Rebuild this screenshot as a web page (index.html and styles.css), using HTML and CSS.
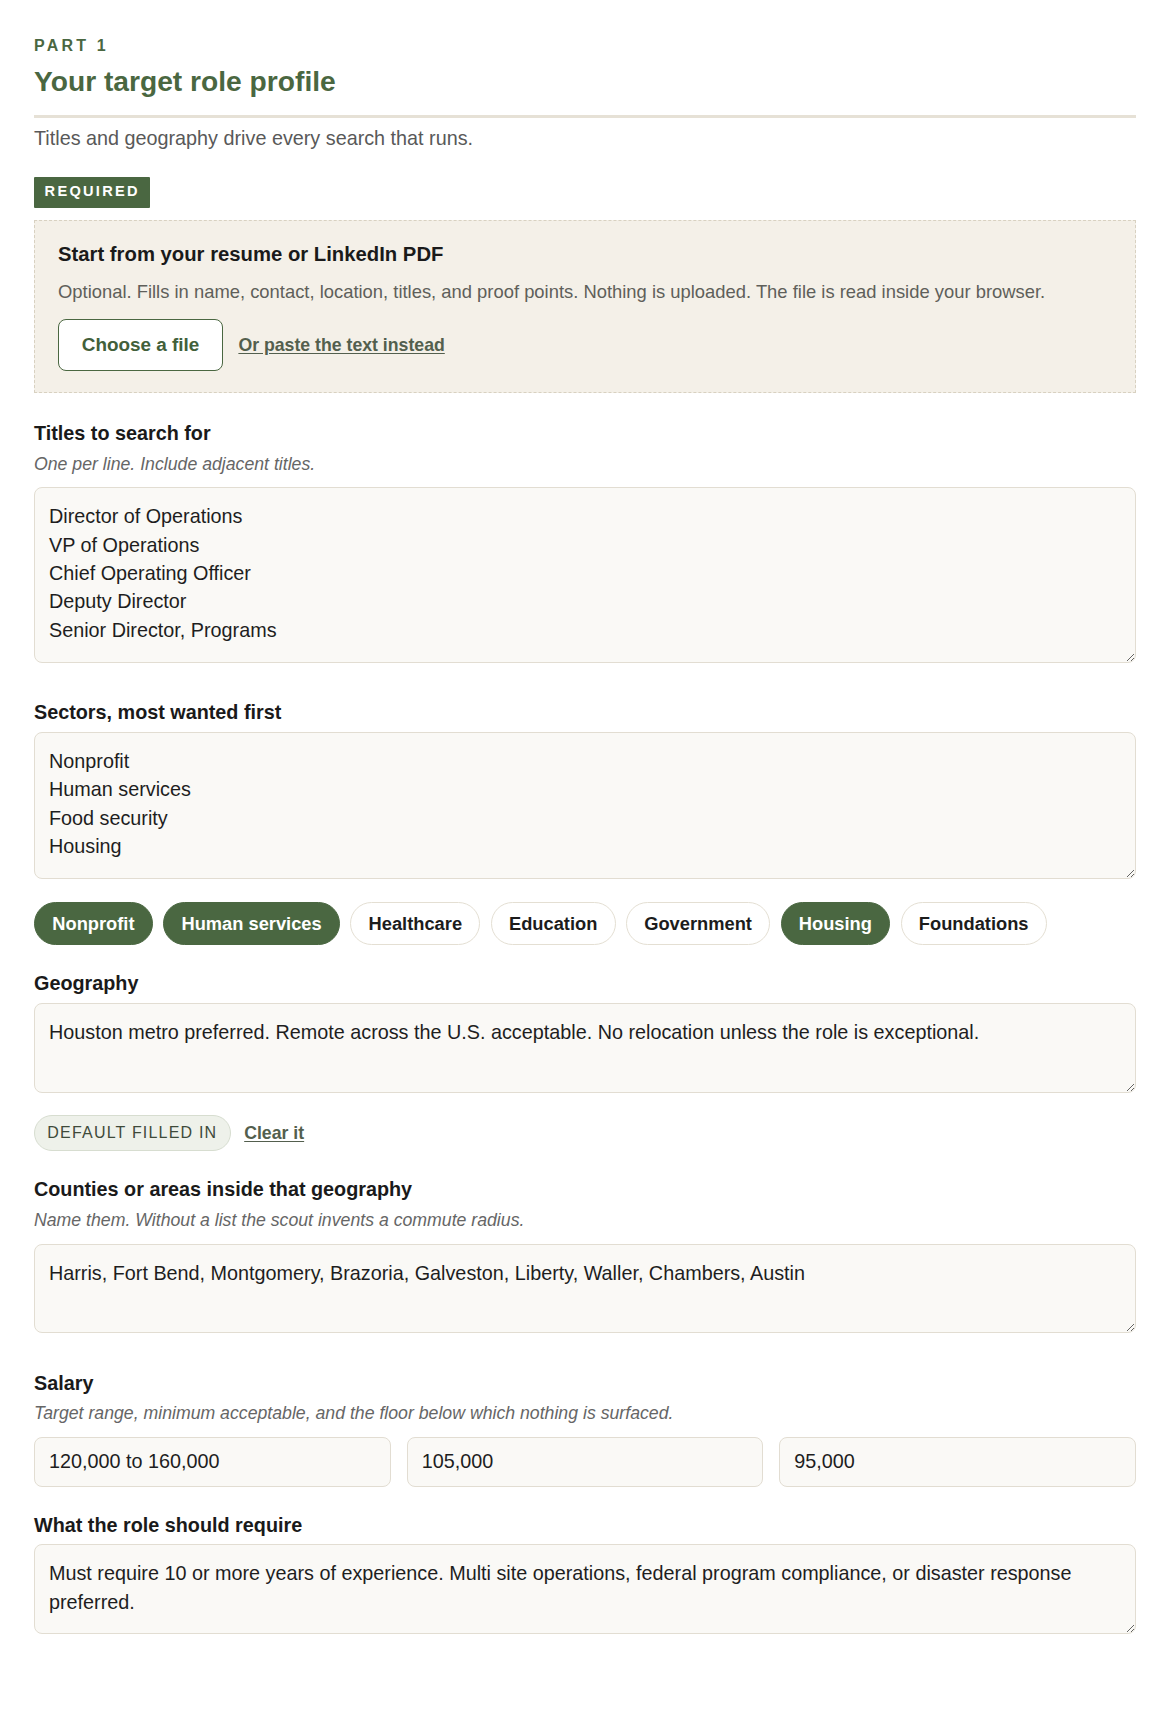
FILE: index.html
```html
<!DOCTYPE html>
<html lang="en">
<head>
<meta charset="utf-8">
<title>Your target role profile</title>
<link rel="stylesheet" href="styles.css">
</head>
<body>
<main class="page">
  <header class="header">
    <p class="eyebrow">Part 1</p>
    <h1 class="title">Your target role profile</h1>
  </header>
  <p class="lede">Titles and geography drive every search that runs.</p>
  <span class="badge">Required</span>

  <section class="upload">
    <h2 class="upload-title">Start from your resume or LinkedIn PDF</h2>
    <p class="upload-desc">Optional. Fills in name, contact, location, titles, and proof points. Nothing is uploaded. The file is read inside your browser.</p>
    <div class="upload-actions">
      <button type="button" class="btn">Choose a file</button>
      <a href="#" class="link">Or paste the text instead</a>
    </div>
  </section>

  <div class="fields">
    <div class="field">
      <label class="label" for="titles">Titles to search for</label>
      <p class="hint">One per line. Include adjacent titles.</p>
      <textarea id="titles" class="area rows-5">Director of Operations
VP of Operations
Chief Operating Officer
Deputy Director
Senior Director, Programs</textarea>
    </div>

    <div class="field">
      <label class="label" for="sectors">Sectors, most wanted first</label>
      <textarea id="sectors" class="area rows-4">Nonprofit
Human services
Food security
Housing</textarea>
      <div class="chips">
        <button type="button" class="chip is-on">Nonprofit</button>
        <button type="button" class="chip is-on">Human services</button>
        <button type="button" class="chip">Healthcare</button>
        <button type="button" class="chip">Education</button>
        <button type="button" class="chip">Government</button>
        <button type="button" class="chip is-on">Housing</button>
        <button type="button" class="chip">Foundations</button>
      </div>
    </div>

    <div class="field">
      <label class="label" for="geo">Geography</label>
      <textarea id="geo" class="area rows-2">Houston metro preferred. Remote across the U.S. acceptable. No relocation unless the role is exceptional.</textarea>
      <div class="status">
        <span class="pill">Default filled in</span>
        <a href="#" class="link">Clear it</a>
      </div>
    </div>

    <div class="field">
      <label class="label" for="areas">Counties or areas inside that geography</label>
      <p class="hint">Name them. Without a list the scout invents a commute radius.</p>
      <textarea id="areas" class="area rows-2">Harris, Fort Bend, Montgomery, Brazoria, Galveston, Liberty, Waller, Chambers, Austin</textarea>
    </div>

    <div class="field">
      <label class="label" for="sal1">Salary</label>
      <p class="hint">Target range, minimum acceptable, and the floor below which nothing is surfaced.</p>
      <div class="salary">
        <input id="sal1" class="input" type="text" value="120,000 to 160,000">
        <input class="input" type="text" value="105,000">
        <input class="input" type="text" value="95,000">
      </div>
    </div>

    <div class="field">
      <label class="label" for="req">What the role should require</label>
      <textarea id="req" class="area rows-2">Must require 10 or more years of experience. Multi site operations, federal program compliance, or disaster response preferred.</textarea>
    </div>
  </div>
</main>
</body>
</html>
```

FILE: styles.css
```css
* { box-sizing: border-box; }

html, body {
  margin: 0;
  background: #ffffff;
}

body {
  font-family: "Liberation Sans", Arial, sans-serif;
  font-size: 19.8px;
  line-height: 1.43;
  color: #1c1c1c;
}

.page {
  padding: 36px 34px 60px;
}

.header {
  border-bottom: 3px solid #e6e1d6;
  padding-bottom: 16.2px;
}

.eyebrow {
  margin: 0;
  font-size: 16px;
  line-height: 19.2px;
  font-weight: 700;
  letter-spacing: 3.2px;
  text-transform: uppercase;
  color: #4a6741;
}

.title {
  margin: 9.75px 0 0;
  font-size: 28.2px;
  line-height: 33.6px;
  font-weight: 700;
  color: #4a6741;
}

.lede {
  margin: 6.1px 0 0;
  line-height: 28.3px;
  color: #595959;
}

.badge {
  display: block;
  width: fit-content;
  margin-top: 25.3px;
  padding: 6px 10.6px 8px;
  background: #4a6741;
  color: #ffffff;
  font-size: 14.6px;
  line-height: 16.6px;
  font-weight: 700;
  letter-spacing: 2.27px;
  text-transform: uppercase;
  border-radius: 1px;
}

.upload {
  margin-top: 11.7px;
  padding: 20px 23px 21px;
  background: #f4f0e8;
  border: 1px dashed #d8d1c1;
}

.upload-title {
  margin: 0;
  font-size: 20.3px;
  line-height: 26.4px;
  font-weight: 700;
  color: #1a1a1a;
}

.upload-desc {
  margin: 11.6px 0 0;
  font-size: 18.4px;
  line-height: 26.5px;
  color: #5f5f5a;
}

.upload-actions {
  display: flex;
  align-items: center;
  gap: 15.3px;
  margin-top: 14px;
}

.btn {
  font-family: inherit;
  font-size: 18.9px;
  line-height: 22.7px;
  font-weight: 700;
  color: #42603a;
  background: #ffffff;
  border: 1.5px solid #4a6741;
  border-radius: 8px;
  padding: 13.3px 22.75px;
  cursor: pointer;
}

.link {
  font-size: 17.7px;
  line-height: 22px;
  font-weight: 700;
  color: #535f4e;
  text-decoration: underline;
  text-underline-offset: 2px;
}

.fields {
  display: flex;
  flex-direction: column;
  gap: 26px;
  margin-top: 28.5px;
}

.label {
  display: block;
  margin-bottom: 6.3px;
  font-weight: 700;
  line-height: 25.35px;
  color: #1a1a1a;
}

.hint {
  margin: 0 0 12px;
  font-size: 17.7px;
  line-height: 22.8px;
  font-style: italic;
  color: #666666;
}

.area {
  display: block;
  width: 100%;
  margin: 0;
  padding: 14px 14px 15.5px;
  font-family: inherit;
  font-size: 19.8px;
  line-height: 28.3px;
  color: #1e1e1e;
  background: #faf9f6;
  border: 1.5px solid #e2ddd2;
  border-radius: 8px;
  resize: vertical;
}

.field > .area:last-child {
  margin-bottom: 11.5px;
}

.rows-5 { height: 175.5px; }
.rows-4 { height: 146.8px; }
.rows-2 { height: 89.6px; }

.chips {
  display: flex;
  flex-wrap: wrap;
  gap: 10.3px;
  margin-top: 23.5px;
}

.chip {
  font-family: inherit;
  font-size: 18.3px;
  line-height: 22.3px;
  font-weight: 700;
  color: #1c1c1c;
  background: #ffffff;
  border: 1.5px solid #e4dfd3;
  border-radius: 999px;
  padding: 9.3px 17.3px;
  cursor: pointer;
}

.chip.is-on {
  background: #4a6741;
  border-color: #4a6741;
  color: #ffffff;
}

.status {
  display: flex;
  align-items: center;
  gap: 13.5px;
  margin-top: 22.3px;
}

.pill {
  display: inline-block;
  padding: 7.8px 12.3px;
  font-size: 16px;
  line-height: 18.7px;
  letter-spacing: 1.2px;
  text-transform: uppercase;
  color: #3e4a3a;
  background: #eef1ea;
  border: 1px solid #d7ddd0;
  border-radius: 999px;
}

.salary {
  display: grid;
  grid-template-columns: repeat(3, 1fr);
  gap: 16px;
}

.input {
  display: block;
  width: 100%;
  height: 49.6px;
  margin: 0;
  padding: 0 14px;
  font-family: inherit;
  font-size: 19.8px;
  color: #1e1e1e;
  background: #faf9f6;
  border: 1.5px solid #e2ddd2;
  border-radius: 8px;
}
```
